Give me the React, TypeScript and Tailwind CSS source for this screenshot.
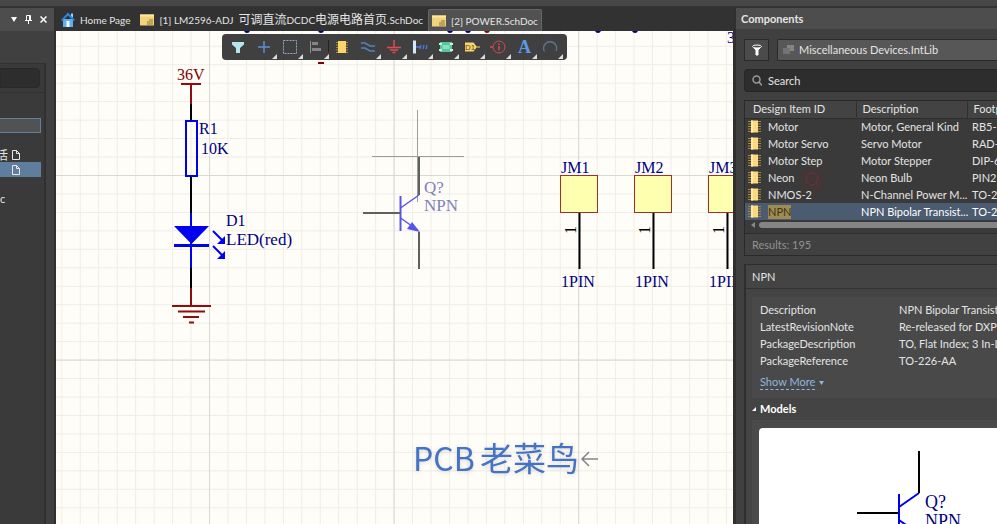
import type { ReactNode } from "react";

type Part = {
  id: string;
  description: string;
  footprint: string;
};

const parts: Part[] = [
  { id: "Motor", description: "Motor, General Kind", footprint: "RB5-10.5" },
  { id: "Motor Servo", description: "Servo Motor", footprint: "RAD-0.4" },
  { id: "Motor Step", description: "Motor Stepper", footprint: "DIP-6" },
  { id: "Neon", description: "Neon Bulb", footprint: "PIN2" },
  { id: "NMOS-2", description: "N-Channel Power M...", footprint: "TO-220" },
  { id: "NPN", description: "NPN Bipolar Transist...", footprint: "TO-226" },
];

const details = [
  ["Description", "NPN Bipolar Transistor"],
  ["LatestRevisionNote", "Re-released for DXP Platform."],
  ["PackageDescription", "TO, Flat Index; 3 In-Line"],
  ["PackageReference", "TO-226-AA"],
];

function SheetIcon() {
  return (
    <svg width="14" height="12" viewBox="0 0 14 12" className="shrink-0">
      <rect width="14" height="11" y="0.5" fill="#f3d27c" />
      <path d="M0 .5h14v2H0z" fill="#ffe6a0" />
      <path d="M9 6h4M7 8h6M7 10h6" stroke="#8c7437" />
    </svg>
  );
}

function HomeIcon() {
  return (
    <svg width="14" height="15" viewBox="0 0 14 15" className="shrink-0">
      <path d="M10 1.5h2v4h-2z" fill="#9ccdf5" />
      <path d="M2 7h10v8H2z" fill="#5fb0f2" />
      <path d="M0 8 7 .5 14 8l-1.5 1L7 3.500 1.500 9z" fill="#2f86e0" />
      <path d="M5.500 9h3v6h-3z" fill="#f4faff" />
    </svg>
  );
}

function PageIcon() {
  return (
    <svg width="8" height="10" viewBox="0 0 8 10" fill="none" stroke="#e8e8e8" className="shrink-0">
      <path d="M.5.5h4l3 3v6h-7zM4.500.5v3h3" />
    </svg>
  );
}

function ChipIcon() {
  return (
    <svg width="13" height="13" viewBox="0 0 13 13" className="block">
      <path d="M0 1.500h13M0 4h13M0 6.500h13M0 9h13M0 11.500h13" stroke="#a8873d" />
      <path d="M3 .5h7v12H3z" fill="#fbd97f" />
      <path d="M3 .5h2v12H3z" fill="#ffe9ac" />
    </svg>
  );
}

const tools: { label: string; menu: boolean; icon: ReactNode }[] = [
  {
    label: "Filter",
    menu: false,
    icon: <path d="M2 3h12v2.500L10 9v5H6V9L2 5.500z" fill="#b4e4ec" />,
  },
  {
    label: "Move",
    menu: true,
    icon: <path d="M8 2v12M2 8h12" stroke="#5b8fd0" strokeWidth="1.500" />,
  },
  {
    label: "Select area",
    menu: true,
    icon: <rect x="1.500" y="1.500" width="13" height="13" fill="none" stroke="#8ea9cc" strokeDasharray="2 1" />,
  },
  {
    label: "Align",
    menu: true,
    icon: (
      <>
        <path d="M2.500 2v12" stroke="#929292" />
        <path d="M4 3h6v3H4zM4 9h9v3H4z" fill="#858585" />
      </>
    ),
  },
  {
    label: "Place part",
    menu: false,
    icon: (
      <>
        <path d="M2 3.500h12M2 6h12M2 8.500h12M2 11h12M2 13.500h12" stroke="#a98a38" />
        <path d="M4 2h8v12H4z" fill="#fbd56b" />
      </>
    ),
  },
  {
    label: "Wire",
    menu: true,
    icon: (
      <path d="M1 4h4l5 3h5M1 9h4l5 3h5" fill="none" stroke="#4f84bd" strokeWidth="1.500" />
    ),
  },
  {
    label: "Power port",
    menu: true,
    icon: <path d="M8 1v7M1 8.500h14M4 11h8M6.500 13.500h3" stroke="#e14b4b" strokeWidth="1.500" />,
  },
  {
    label: "Harness",
    menu: true,
    icon: (
      <>
        <path d="M1 1.500h3v13H1z" fill="#d4eafa" />
        <path d="M4 8h4M8 10l1-4M11 10l1-4M14 10l1-4" stroke="#4a78e0" strokeWidth="1.300" />
      </>
    ),
  },
  {
    label: "Sheet symbol",
    menu: true,
    icon: (
      <>
        <path d="M2 3h12v10H2z" fill="#58c5a0" />
        <path d="M1 4h3v2H1zM12 4h3v2h-3zM1 10h3v2H1zM12 10h3v2h-3z" fill="#d3efe2" />
        <path d="M4.500 6h7v4h-7z" fill="#8ce0c0" />
      </>
    ),
  },
  {
    label: "Port",
    menu: true,
    icon: (
      <>
        <path d="M1 3.500h8.500L13 8l-3.500 4.500H1z" fill="#fbd56b" />
        <path d="M13 8h3" stroke="#fbd56b" />
        <text x="1" y="11" fontSize="8" fontFamily="Liberation Sans, sans-serif" fill="#5c4510">
          D1
        </text>
      </>
    ),
  },
  {
    label: "Directive",
    menu: true,
    icon: (
      <g fill="none" stroke="#d9494c">
        <circle cx="9" cy="8" r="6" />
        <path d="M0 8h3M9 7v4.500M9 4.500v1.500" strokeWidth="1.500" />
      </g>
    ),
  },
  {
    label: "Text",
    menu: true,
    icon: (
      <text x="2" y="14" fontSize="18" fontWeight="700" fontFamily="Liberation Serif, serif" fill="#5b9be6">
        A
      </text>
    ),
  },
  {
    label: "Arc",
    menu: true,
    icon: <path d="M2.500 12.500A6.500 6.500 0 1 1 14 12" fill="none" stroke="#5b7590" strokeWidth="1.300" />,
  },
];

function Toolbar() {
  return (
    <div className="absolute top-[3px] left-[166px] flex h-[26px] w-[345px] items-center rounded bg-[#404041] pl-[3px]">
      {tools.map((tool) => (
        <button
          key={tool.label}
          type="button"
          aria-label={tool.label}
          className="relative flex h-full w-[26px] shrink-0 items-center justify-center"
        >
          <svg width="16" height="16" viewBox="0 0 16 16">
            {tool.icon}
          </svg>
          {tool.menu && (
            <svg width="5" height="5" className="absolute right-0 bottom-[1px]">
              <path d="M5 0v5H0z" fill="#dcdcdc" />
            </svg>
          )}
          {tool.label === "Align" && <span className="absolute top-[6px] right-0 h-3 w-px bg-[#222]" />}
        </button>
      ))}
    </div>
  );
}

function Header({ x, name }: { x: number; name: string }) {
  return (
    <g transform={`translate(${x} 0)`}>
      <text x="0" y="173">
        {name}
      </text>
      <rect x="-0.500" y="175.500" width="37" height="37" fill="#ffffb0" stroke="#a03030" />
      <path d="M18.500 213v56" stroke="#000" strokeWidth="2" />
      <text transform="translate(15 234) rotate(-90)" fill="#000">
        1
      </text>
      <text x="0" y="287">
        1PIN
      </text>
    </g>
  );
}

function Schematic() {
  return (
    <svg className="block h-full w-full" fontFamily="Liberation Serif, Noto Serif, serif" fontSize="16">
      <defs>
        <pattern id="minor" width="18.460" height="18.460" patternUnits="userSpaceOnUse" x="209" y="175">
          <path d="M.5 0v18.460M0 .5h18.460" stroke="#f0ece8" />
        </pattern>
        <pattern id="major" width="184.600" height="184.600" patternUnits="userSpaceOnUse" x="209" y="175">
          <path d="M.5 0v184.600M0 .5h184.600" stroke="#d9d8d5" />
        </pattern>
      </defs>
      {/* sheet coordinates start at the window corner */}
      <g transform="translate(-56 -31)">
        <rect x="56" y="31" width="100%" height="100%" fill="url(#minor)" />
        <rect x="56" y="31" width="100%" height="100%" fill="url(#major)" />

        <g fill="#000080">
          <circle cx="247" cy="30" r="3" />
          <circle cx="321" cy="30" r="3" />
          <circle cx="450" cy="30" r="3" />
          <circle cx="468" cy="30" r="3" />
          <circle cx="598" cy="30" r="3" />
          <circle cx="635" cy="30" r="3" />
          <circle cx="487" cy="30" r="3" fill="#7c1010" />
          <path d="M318 62h6v2h-6z" fill="#800000" />
          <text x="727" y="43">
            3
          </text>
        </g>

        <g stroke="#8b0f0f" strokeWidth="2" fill="none">
          <path d="M181 84h20M191 84v20M191 287v18" />
          <path d="M172 306h39M178 311.500h27M183 317h16M189 322.500h5" />
        </g>
        <path d="M191 104v17M191 177v37M191 268v20" stroke="#000" strokeWidth="2" />
        <g stroke="#0000f0" fill="none" strokeWidth="2">
          <rect x="186" y="121" width="11" height="55" />
          <path d="M191 213v55" />
          <path d="M174 226h35l-17.500 18z" fill="#0000f0" stroke="none" />
          <path d="M174 245.500h35" strokeWidth="3" />
          <path d="M213 231l9 9M213 246l9 9" />
          <path d="M225 236v8h-8zM225 251v8h-8z" fill="#0000f0" stroke="none" />
        </g>
        <text x="177" y="80" fill="#800000">
          36V
        </text>
        <g fill="#000080">
          <text x="199" y="134">R1</text>
          <text x="201" y="154">10K</text>
          <text x="226" y="226">D1</text>
          <text x="226" y="245" fontSize="17">LED(red)</text>
          <Header x={561} name="JM1" />
          <Header x={635} name="JM2" />
          <Header x={709} name="JM3" />
        </g>

        <path d="M417.500 110v92M372 156.500h92" stroke="#9c9c98" />
        <path d="M419 157v38M363 213h37M419 232v37" stroke="#60605c" strokeWidth="2" />
        <g stroke="#5555ee" strokeWidth="2">
          <path d="M400.500 196v35" />
          <path d="M400.500 208l18.500-13M400.500 218l10 7" strokeWidth="1.500" />
          <path d="M407 229l5-7 8 10z" fill="#5555ee" stroke="none" />
        </g>
        <g fill="#8080bb" fontSize="17">
          <text x="424" y="193">Q?</text>
          <text x="424" y="211">NPN</text>
        </g>

        <g fill="#4472c4" fontFamily="Noto Sans CJK SC, sans-serif" className="drop-shadow-sm">
          <text x="413" y="471" fontSize="32">PCB</text>
          <text x="480" y="471" fontSize="33">老菜鸟</text>
        </g>
        <path d="M598 459h-16m7-7-7 7 7 7" fill="none" stroke="#858585" strokeWidth="1.500" />
      </g>
    </svg>
  );
}

function ProjectsPanel() {
  return (
    <aside className="flex w-14 shrink-0 flex-col border-r-2 border-[#303030] bg-[#404040]">
      <div className="flex h-[23px] shrink-0 items-center justify-end gap-2 bg-[#4d4d4d] pr-[7px]">
        <button type="button" aria-label="Panel menu">
          <svg width="6" height="5" className="block">
            <path d="M0 0h6L3 5z" fill="#fff" />
          </svg>
        </button>
        <button type="button" aria-label="Pin panel">
          <svg width="7" height="9" viewBox="0 0 7 9" className="block" fill="none" stroke="#fff">
            <path d="M1.500 5V.5h4V5M0 5.500h7M3.500 6v3M4.500 0v5" />
          </svg>
        </button>
        <button type="button" aria-label="Close panel">
          <svg width="7" height="7" viewBox="0 0 7 7" className="block">
            <path d="M.5.5l6 6M6.500.5l-6 6" stroke="#fff" strokeWidth="1.500" />
          </svg>
        </button>
      </div>
      <div className="mt-8 mr-2 flex grow flex-col border-t border-r-2 border-[#303030] bg-[#3a3a3a] pt-1">
        <input
          aria-label="Search projects"
          className="mr-1 h-5 w-10 rounded-r border border-[#292929] bg-[#2d2d2d]"
        />
        <div className="mt-1 border-t border-[#303030]" />
        <div className="mt-[25px] h-[15px] w-[41px] border border-l-0 border-[#627f9d] bg-[#505254]" />
        <div className="mt-[14px] flex h-[15px] w-[41px] items-center gap-1">
          <span className="flex w-2 justify-end overflow-hidden font-['Noto_Sans_CJK_SC',sans-serif] text-[12px]">
            活
          </span>
          <PageIcon />
        </div>
        <div className="flex h-[15px] w-[41px] items-center bg-[#5f7d9d] pl-3">
          <PageIcon />
        </div>
        <span className="mt-[14px]">c</span>
      </div>
    </aside>
  );
}

function DocumentTabs() {
  return (
    <nav className="flex h-[23px] shrink-0 items-center overflow-hidden bg-[#323233] pl-[5px] text-[10px] whitespace-nowrap">
      <a href="#home" className="flex items-center gap-[5px] pr-[10px]">
        <HomeIcon />
        Home Page
      </a>
      <a href="#adj" className="flex items-center gap-[5px] pr-[5px]">
        <SheetIcon />
        [1] LM2596-ADJ
        <span>
          <span className="text-[12px]">可调直流</span>DCDC<span className="text-[12px]">电源电路首页</span>.SchDoc
        </span>
      </a>
      <a
        href="#power"
        aria-current="page"
        className="mt-px flex h-[22px] items-center gap-[5px] rounded-t-xs border border-b-0 border-[#666] bg-[#515152] px-[3px]"
      >
        <SheetIcon />
        [2] POWER.SchDoc
      </a>
    </nav>
  );
}

function PartsTable() {
  return (
    <div className="relative mt-2 shrink-0 border border-r-0 border-[#2a2a2a] bg-[#3a3a3a]">
      <table className="w-[340px] table-fixed border-collapse text-left whitespace-nowrap">
        <thead>
          <tr className="h-[17px] border-b border-[#2d2d2d] bg-[#434343]">
            <th className="w-[111px] p-0 pl-2 font-normal">Design Item ID</th>
            <th className="w-[111px] border-l border-[#303030] p-0 pl-[6px] font-normal">Description</th>
            <th className="border-l border-[#303030] p-0 pl-[6px] font-normal">Footprint</th>
          </tr>
        </thead>
        <tbody>
          {parts.map((part) => (
            <tr key={part.id} className={part.id === "NPN" ? "h-[17px] bg-[#4b5b70] text-white" : "h-[17px]"}>
              <td className="p-0 pl-[3px]">
                <span className="flex items-center gap-[7px]">
                  <ChipIcon />
                  {part.id === "NPN" ? (
                    <mark className="bg-[#a08c50] leading-[14px] text-[#39331f]">{part.id}</mark>
                  ) : (
                    part.id
                  )}
                </span>
              </td>
              <td className="p-0 pl-[5px]">{part.description}</td>
              <td className="p-0 pl-[5px]">{part.footprint}</td>
            </tr>
          ))}
        </tbody>
      </table>
      <svg width="22" height="22" className="absolute top-[68px] left-[57px]" fill="none" stroke="#633636">
        <rect width="22" height="22" fill="#7a2020" fillOpacity="0.15" stroke="none" />
        <circle cx="10" cy="10" r="6" />
        <path d="M14 14l4 4" />
      </svg>
      <div className="flex h-[10px] items-center gap-1 pl-[6px]">
        <svg width="4" height="6">
          <path d="M4 0v6L0 3z" fill="#888" />
        </svg>
        <div className="h-[6px] grow rounded-l-full bg-[#858585]" />
      </div>
      <p className="mt-[3px] flex h-[22px] items-center border-t border-[#2e2e2e] bg-[#414141] pl-[7px] text-[#929292]">
        Results: 195
      </p>
    </div>
  );
}

function ComponentsPanel() {
  return (
    <aside className="flex w-[264px] shrink-0 flex-col overflow-hidden border-l-3 border-[#303030] bg-[#404040]">
      <h2 className="flex h-[21px] shrink-0 items-center bg-[#4d4d4d] pl-[5px] font-bold">Components</h2>
      <div className="flex grow flex-col pl-2">
        <div className="mt-[10px] flex h-[22px] shrink-0 gap-2">
          <button
            type="button"
            aria-label="Filter components"
            className="flex w-[25px] items-center justify-center border border-[#2a2a2a] bg-[#4b4b4b]"
          >
            <svg width="12" height="12" viewBox="0 0 12 12">
              <path d="M1.500 2.500 5 6v5h2V6l3.500-3.500" fill="#fff" stroke="#fff" />
              <ellipse cx="6" cy="2.500" rx="4.500" ry="1.500" fill="#4b4b4b" stroke="#fff" />
            </svg>
          </button>
          <button
            type="button"
            className="flex grow items-center gap-[5px] rounded-l-xs border border-r-0 border-[#2a2a2a] bg-[#575757] pl-[5px]"
          >
            <svg width="11" height="10" viewBox="0 0 11 10">
              <path d="M4 0h7v6H4z" fill="#858585" />
              <path d="M0 3h7v6H0z" fill="#737373" />
            </svg>
            Miscellaneous Devices.IntLib
          </button>
        </div>
        <label className="mt-2 flex h-[23px] shrink-0 items-center gap-[6px] rounded-l-sm border border-r-0 border-[#262626] bg-[#2d2d2d] pl-[7px]">
          <svg width="10" height="11" viewBox="0 0 10 11" fill="none" stroke="#9a9a9a" strokeWidth="1.500">
            <circle cx="4.500" cy="4.500" r="3.500" />
            <path d="M7 7l3 3.500" />
          </svg>
          <input type="search" aria-label="Search" placeholder="Search" className="w-40 placeholder:text-[#e4e4e4]" />
        </label>
        <PartsTable />
        <section className="mt-2 flex grow flex-col border-t border-l-2 border-[#2e2e2e] bg-[#444]">
          <h3 className="flex h-6 shrink-0 items-center border-b border-[#333] pl-[6px]">NPN</h3>
          <div className="mt-2 ml-[6px] shrink-0 bg-[#494949] pt-1 pb-2 pl-[8px]">
            <dl className="grid grid-cols-[139px_1fr] leading-[17px] whitespace-nowrap">
              {details.map(([name, value]) => (
                <div key={name} className="contents">
                  <dt>{name}</dt>
                  <dd>{value}</dd>
                </div>
              ))}
            </dl>
            <button type="button" className="mt-[6px] flex items-center gap-1 text-[#8fb6de]">
              <span className="border-b border-dashed border-[#8fb6de] leading-[14px]">Show More</span>
              <svg width="5" height="4">
                <path d="M0 0h5L2.500 4z" fill="#8fb6de" />
              </svg>
            </button>
          </div>
          <h4 className="flex h-[22px] shrink-0 items-center gap-1 pl-[6px] font-bold text-white">
            <svg width="4" height="4">
              <path d="M4 0v4H0z" fill="#fff" />
            </svg>
            Models
          </h4>
          <div className="ml-[6px] grow bg-[#4a4a4a] pt-2 pl-[7px]">
            <svg
              className="block h-full w-full rounded-tl bg-white"
              fontFamily="Liberation Serif, serif"
              fontSize="18"
            >
              <path d="M160 23v42M98 85h42" stroke="#000" strokeWidth="2" />
              <path d="M140 66v40M140 79l20-14M140 92l20 14" stroke="#0000f0" strokeWidth="2" />
              <g fill="#000080">
                <text x="166" y="80">Q?</text>
                <text x="166" y="99">NPN</text>
              </g>
            </svg>
          </div>
        </section>
      </div>
    </aside>
  );
}

export default function App() {
  return (
    <div className="flex h-screen flex-col overflow-hidden bg-[#404040] font-['Lato','Noto_Sans_CJK_SC',sans-serif] text-[11px] leading-4 text-[#e4e4e4]">
      <div className="h-2 shrink-0 border-b-2 border-[#333] bg-[#474747]" />
      <div className="flex min-h-0 grow">
        <ProjectsPanel />
        <main className="flex min-w-0 grow flex-col">
          <DocumentTabs />
          <div className="relative min-h-0 grow overflow-hidden bg-[#fffdf8]">
            <Schematic />
            <Toolbar />
          </div>
        </main>
        <ComponentsPanel />
      </div>
    </div>
  );
}
